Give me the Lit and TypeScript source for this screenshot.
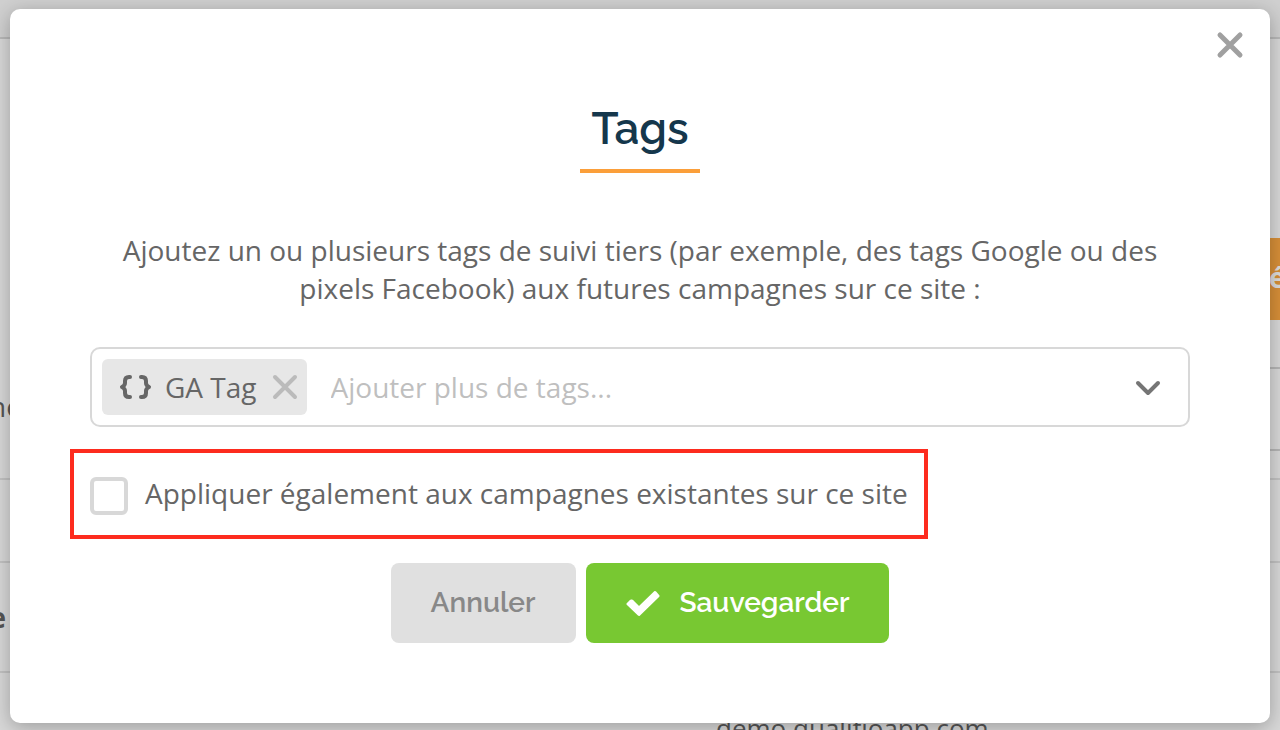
import { LitElement, html, css } from "lit";
import { customElement, state } from "lit/decorators.js";

/* The site settings page, dimmed, that shows around the dialog. */
@customElement("page-backdrop")
class PageBackdrop extends LitElement {
  static styles = css`
    :host {
      position: absolute;
      inset: 0;
      overflow: hidden;
      display: flex;
      flex-direction: column;
      background: #d8d8d8;
      color: #555;
      font: 28px/38px "Open Sans", "Noto Sans", sans-serif;
    }
    .bar {
      flex: none;
      height: 37px;
      background: #d0d0d0;
      border-bottom: 2px solid #b8b8b8;
    }
    .columns {
      display: flex;
      justify-content: space-between;
      height: 634px;
      flex: none;
    }
    .column {
      flex: 1;
      display: flex;
      flex-direction: column;
    }
    .cell {
      box-sizing: border-box;
      flex: none;
      border-bottom: 2px solid #c2c2c2;
    }
    .strong-line {
      border-color: #b5b5b5;
    }
    .tail {
      display: flex;
      justify-content: flex-end;
      width: 22px;
    }
    .tail.bold {
      width: 6px;
      font-weight: 700;
    }
    .name {
      height: 441px;
      padding-top: 348px;
    }
    .mid {
      height: 83px;
    }
    .low {
      height: 110px;
      padding-top: 35px;
    }
    .action {
      height: 330px;
      padding-top: 199px;
      display: flex;
      justify-content: flex-end;
      align-items: flex-start;
    }
    .orange {
      box-sizing: border-box;
      width: 40px;
      height: 82px;
      padding: 20px 0 20px 29px;
      overflow: hidden;
      background: #d78f38;
      color: #dcdcdc;
      font-weight: 700;
    }
    .gap {
      height: 82px;
    }
    .small {
      height: 29px;
    }
    .site {
      padding: 36px 0 0 716px;
      font-size: 26px;
    }
  `;

  render() {
    return html`
      <div class="bar"></div>
      <div class="columns">
        <div class="column">
          <div class="cell name"><div class="tail">ne</div></div>
          <div class="cell mid"></div>
          <div class="cell low"><div class="tail bold">e</div></div>
        </div>
        <div class="column">
          <div class="cell action strong-line"><div class="orange">é</div></div>
          <div class="cell gap strong-line"></div>
          <div class="cell small"></div>
          <div class="cell mid"></div>
          <div class="cell low"></div>
        </div>
      </div>
      <div class="site">demo.qualifioapp.com</div>
    `;
  }
}

@customElement("app-root")
class AppRoot extends LitElement {
  @state() private tags = ["GA Tag"];

  static styles = css`
    :host {
      display: block;
      position: relative;
      min-height: 100vh;
      box-sizing: border-box;
      padding: 9px 10px 7px;
      overflow: hidden;
      color: #666;
      font: 28px/38px "Open Sans", "Noto Sans", sans-serif;
    }
    .dialog {
      position: relative;
      box-sizing: border-box;
      min-height: calc(100vh - 16px);
      padding: 92px 80px 80px;
      border-radius: 10px;
      background: #fff;
      box-shadow: 0 4px 20px rgba(0, 0, 0, 0.28);
    }
    button {
      border: 0;
      padding: 0;
      background: none;
      cursor: pointer;
    }
    svg {
      display: block;
      fill: none;
      stroke: currentColor;
      stroke-linecap: round;
      stroke-linejoin: round;
    }
    .close {
      position: absolute;
      top: 22px;
      right: 26px;
      color: #a0a0a0;
    }
    .title {
      width: 120px;
      margin: 0 auto;
      padding-bottom: 12px;
      border-bottom: 4px solid #fb9f3a;
      color: #15374c;
      font: 600 44px/56px Raleway, Lato, sans-serif;
      text-align: center;
    }
    .intro {
      margin: 58px 0 40px;
      text-align: center;
    }
    .field {
      display: flex;
      align-items: center;
      box-sizing: border-box;
      min-height: 80px;
      padding: 10px;
      border: 2px solid #d8d8d8;
      border-radius: 10px;
    }
    .chip {
      display: flex;
      align-items: center;
      height: 56px;
      padding: 0 8px 0 16px;
      border-radius: 6px;
      background: #e7e7e7;
    }
    .chip-name {
      margin: 0 14px 0 12px;
    }
    .remove {
      color: #bbb;
    }
    .entry {
      flex: 1;
      min-width: 0;
      margin-left: 24px;
      padding: 0;
      border: 0;
      outline: 0;
      background: none;
      color: inherit;
      font: inherit;
    }
    .entry::placeholder {
      color: #bfbfbf;
      opacity: 1;
    }
    .open {
      margin-right: 16px;
      padding-top: 2px;
      color: #757575;
    }
    .apply {
      display: flex;
      align-items: center;
      box-sizing: border-box;
      width: fit-content;
      height: 90px;
      margin: 22px 0 24px -20px;
      padding: 0 16px;
      border: 4px solid #fd2b1e;
    }
    .apply label {
      padding-bottom: 2px;
    }
    .tick {
      appearance: none;
      box-sizing: border-box;
      width: 38px;
      height: 38px;
      margin: 4px 17px 0 0;
      border: 4px solid #d8d8d8;
      border-radius: 6px;
      background: #fff;
    }
    .tick:checked {
      background: #78c832;
    }
    .actions {
      display: flex;
      justify-content: center;
      gap: 10px;
    }
    .button {
      display: flex;
      align-items: center;
      gap: 20px;
      height: 80px;
      padding: 0 40px;
      border-radius: 8px;
      font: 600 28px/38px Raleway, Lato, sans-serif;
    }
    .cancel {
      background: #e0e0e0;
      color: #888;
    }
    .save {
      background: #78c832;
      color: #fff;
    }
  `;

  private removeTag(name: string) {
    this.tags = this.tags.filter((tag) => tag !== name);
  }

  render() {
    return html`
      <page-backdrop aria-hidden="true"></page-backdrop>
      <section class="dialog" role="dialog" aria-labelledby="title">
        <button class="close" aria-label="Fermer">
          <svg width="28" height="28" viewBox="0 0 28 28" stroke-width="5">
            <path d="M4 4l20 20M24 4L4 24" />
          </svg>
        </button>
        <h1 class="title" id="title">Tags</h1>
        <p class="intro">
          Ajoutez un ou plusieurs tags de suivi tiers (par exemple, des tags Google ou des pixels
          Facebook) aux futures campagnes sur ce site :
        </p>
        <div class="field">
          ${this.tags.map(
            (tag) => html`
              <span class="chip">
                <svg width="35" height="28" viewBox="0 0 35 28" stroke-width="4">
                  <path d="M12 4h-1q-4 0-4 4v2q0 2.500-3 4q3 1.500 3 4v2q0 4 4 4h1M23 4h1q4 0 4 4v2q0 2.500 3 4q-3 1.500-3 4v2q0 4-4 4h-1" />
                </svg>
                <span class="chip-name">${tag}</span>
                <button class="remove" aria-label="Retirer ${tag}" @click=${() => this.removeTag(tag)}>
                  <svg width="28" height="28" viewBox="0 0 28 28" stroke-width="4">
                    <path d="M4 4l20 20M24 4L4 24" />
                  </svg>
                </button>
              </span>
            `
          )}
          <input class="entry" aria-label="Tags" placeholder="Ajouter plus de tags..." />
          <button class="open" aria-label="Afficher les tags">
            <svg width="28" height="20" viewBox="0 0 28 20" stroke-width="4">
              <path d="M4 5l10 10L24 5" />
            </svg>
          </button>
        </div>
        <div class="apply">
          <input class="tick" type="checkbox" id="existing" />
          <label for="existing">Appliquer également aux campagnes existantes sur ce site</label>
        </div>
        <div class="actions">
          <button class="button cancel">Annuler</button>
          <button class="button save">
            <svg width="34" height="27" viewBox="0 0 34 27" stroke-width="3">
              <path fill="currentColor" d="M5 11L2 14L13 24.500L32 6L29 2.500L13 18L6 11Z" />
            </svg>
            Sauvegarder
          </button>
        </div>
      </section>
    `;
  }
}
